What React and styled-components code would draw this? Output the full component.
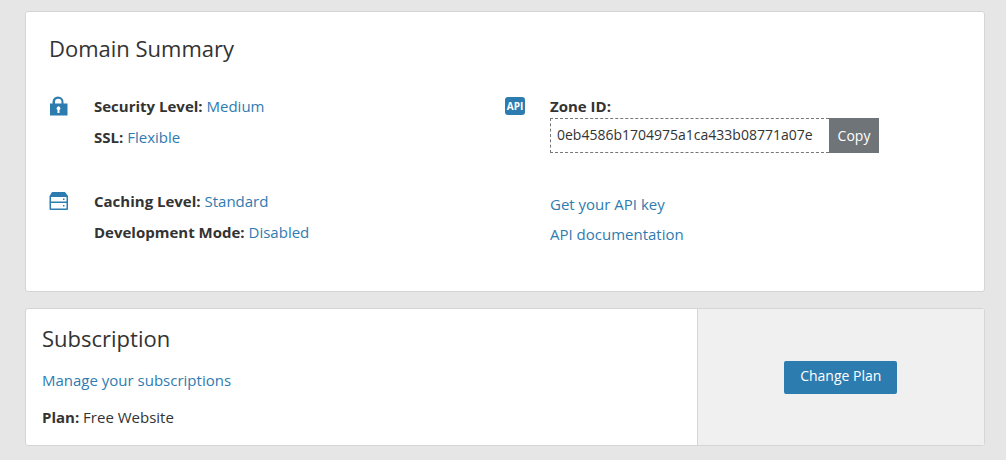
import React from "react";
import styled, { createGlobalStyle } from "styled-components";

const ZONE_ID = "0eb4586b1704975a1ca433b08771a07e";

class App extends React.Component {
  constructor(props) {
    super(props);
    this.handleCopy = this.handleCopy.bind(this);
  }

  handleCopy() {
    if (navigator.clipboard) {
      navigator.clipboard.writeText(ZONE_ID);
    }
  }

  render() {
    return (
      <Page>
        <GlobalStyle />
        <SummaryCard>
          <Title>Domain Summary</Title>
          <Columns>
            <Column>
              <Group>
                <LockIcon />
                <Lines>
                  <Line>
                    <b>Security Level:</b> <Link href="#security">Medium</Link>
                  </Line>
                  <Line>
                    <b>SSL:</b> <Link href="#ssl">Flexible</Link>
                  </Line>
                </Lines>
              </Group>
              <Group>
                <DriveIcon />
                <Lines>
                  <Line>
                    <b>Caching Level:</b> <Link href="#caching">Standard</Link>
                  </Line>
                  <Line>
                    <b>Development Mode:</b> <Link href="#dev">Disabled</Link>
                  </Line>
                </Lines>
              </Group>
            </Column>
            <Column>
              <Group>
                <ApiBadge>API</ApiBadge>
                <Zone>
                  <ZoneLabel htmlFor="zone-id">Zone ID:</ZoneLabel>
                  <CopyBox>
                    <ZoneInput id="zone-id" readOnly value={ZONE_ID} />
                    <CopyButton onClick={this.handleCopy}>Copy</CopyButton>
                  </CopyBox>
                  <ApiLinks>
                    <Link href="#key">Get your API key</Link>
                    <Link href="#docs">API documentation</Link>
                  </ApiLinks>
                </Zone>
              </Group>
            </Column>
          </Columns>
        </SummaryCard>
        <SubscriptionCard>
          <SubscriptionInfo>
            <Title>Subscription</Title>
            <Link href="#subscriptions">Manage your subscriptions</Link>
            <Line>
              <b>Plan:</b> Free Website
            </Line>
          </SubscriptionInfo>
          <SubscriptionAction>
            <PlanButton>Change Plan</PlanButton>
          </SubscriptionAction>
        </SubscriptionCard>
      </Page>
    );
  }
}

export default App;

const LockIcon = () => (
  <Icon viewBox="0 0 20 20" aria-hidden="true">
    <path
      fillRule="evenodd"
      d="M1 7.500h2.500V6a5.500 5.500 0 0 1 11 0v1.500H18.500V19.500H1zM6 7.500h6.500V6a3.250 3.250 0 0 0-6.500 0zM8.500 17h2v-3a1.900 1.900 0 1 0-2 0z"
    />
  </Icon>
);

const DriveIcon = () => (
  <Icon viewBox="0 0 20 20" aria-hidden="true">
    <path
      fillRule="evenodd"
      d="M3 1h13l3 4V18a1 1 0 0 1-1 1H1.500a1 1 0 0 1-1-1V5zM2 6v4.500h15.500V6zM2 12v5.500h15.500V12z"
    />
    <path d="M14 7.500h1.500v1.500h-1.500zM14 14h1.500v1.500h-1.500z" />
  </Icon>
);

const GlobalStyle = createGlobalStyle`
  * {
    box-sizing: border-box;
  }

  body {
    margin: 0;
    background: #e6e6e6;
    color: #333;
    font: 15px/20px "Open Sans", sans-serif;
  }
`;

const Page = styled.main`
  display: flex;
  flex-direction: column;
  gap: 16px;
  padding: 11px 21px 14px 25px;
`;

const Card = styled.section`
  background: #fff;
  border: 1px solid #d5d5d5;
  border-radius: 3px;
`;

const SummaryCard = styled(Card)`
  padding: 21px 23px 47px;
`;

const SubscriptionCard = styled(Card)`
  display: grid;
  grid-template-columns: 7fr 3fr;
`;

const Title = styled.h2`
  margin: 0;
  font-size: 22px;
  line-height: 30px;
  font-weight: 400;
`;

const Columns = styled.div`
  display: grid;
  grid-template-columns: 1fr 1fr;
  margin-top: 33px;
`;

const Column = styled.div`
  display: flex;
  flex-direction: column;
  gap: 44px;
`;

const Group = styled.div`
  display: flex;
  gap: 25px;
`;

const Lines = styled.div`
  display: flex;
  flex-direction: column;
  gap: 11px;
`;

const Zone = styled.div`
  display: flex;
  flex-direction: column;
`;

const Line = styled.div``;

const Icon = styled.svg`
  flex: none;
  width: 20px;
  height: 20px;
  fill: #2c7cb0;
`;

const ApiBadge = styled.span`
  flex: none;
  width: 20px;
  height: 18px;
  margin-top: 1px;
  border-radius: 3px;
  background: #2c7cb0;
  color: #fff;
  font-size: 10px;
  line-height: 18px;
  font-weight: 700;
  text-align: center;
`;

const Link = styled.a`
  color: #2f7bb0;
  text-decoration: none;
`;

const ZoneLabel = styled.label`
  font-weight: 700;
`;

const CopyBox = styled.div`
  display: flex;
  margin-top: 2px;
`;

const ZoneInput = styled.input`
  width: 279px;
  height: 35px;
  padding: 0 6px 2px;
  border: 1px dashed #777;
  border-right: 0;
  background: #fff;
  color: #333;
  font: inherit;
  font-size: 14px;
`;

const CopyButton = styled.button`
  width: 50px;
  padding: 0;
  border: 0;
  background: #6f7479;
  color: #fff;
  font: inherit;
  font-size: 14px;
`;

const ApiLinks = styled.div`
  display: flex;
  flex-direction: column;
  gap: 10px;
  margin-top: 41px;
`;

const SubscriptionInfo = styled.div`
  display: flex;
  flex-direction: column;
  align-items: flex-start;
  gap: 17px;
  padding: 14px 16px 18px;
`;

const SubscriptionAction = styled.div`
  display: flex;
  align-items: center;
  justify-content: center;
  border-left: 1px solid #d5d5d5;
  background: #f0f0f0;
`;

const PlanButton = styled.button`
  height: 33px;
  padding: 0 16px 2px;
  border: 0;
  border-radius: 2px;
  background: #2c7cb0;
  color: #fff;
  font: inherit;
  font-size: 14px;
`;
